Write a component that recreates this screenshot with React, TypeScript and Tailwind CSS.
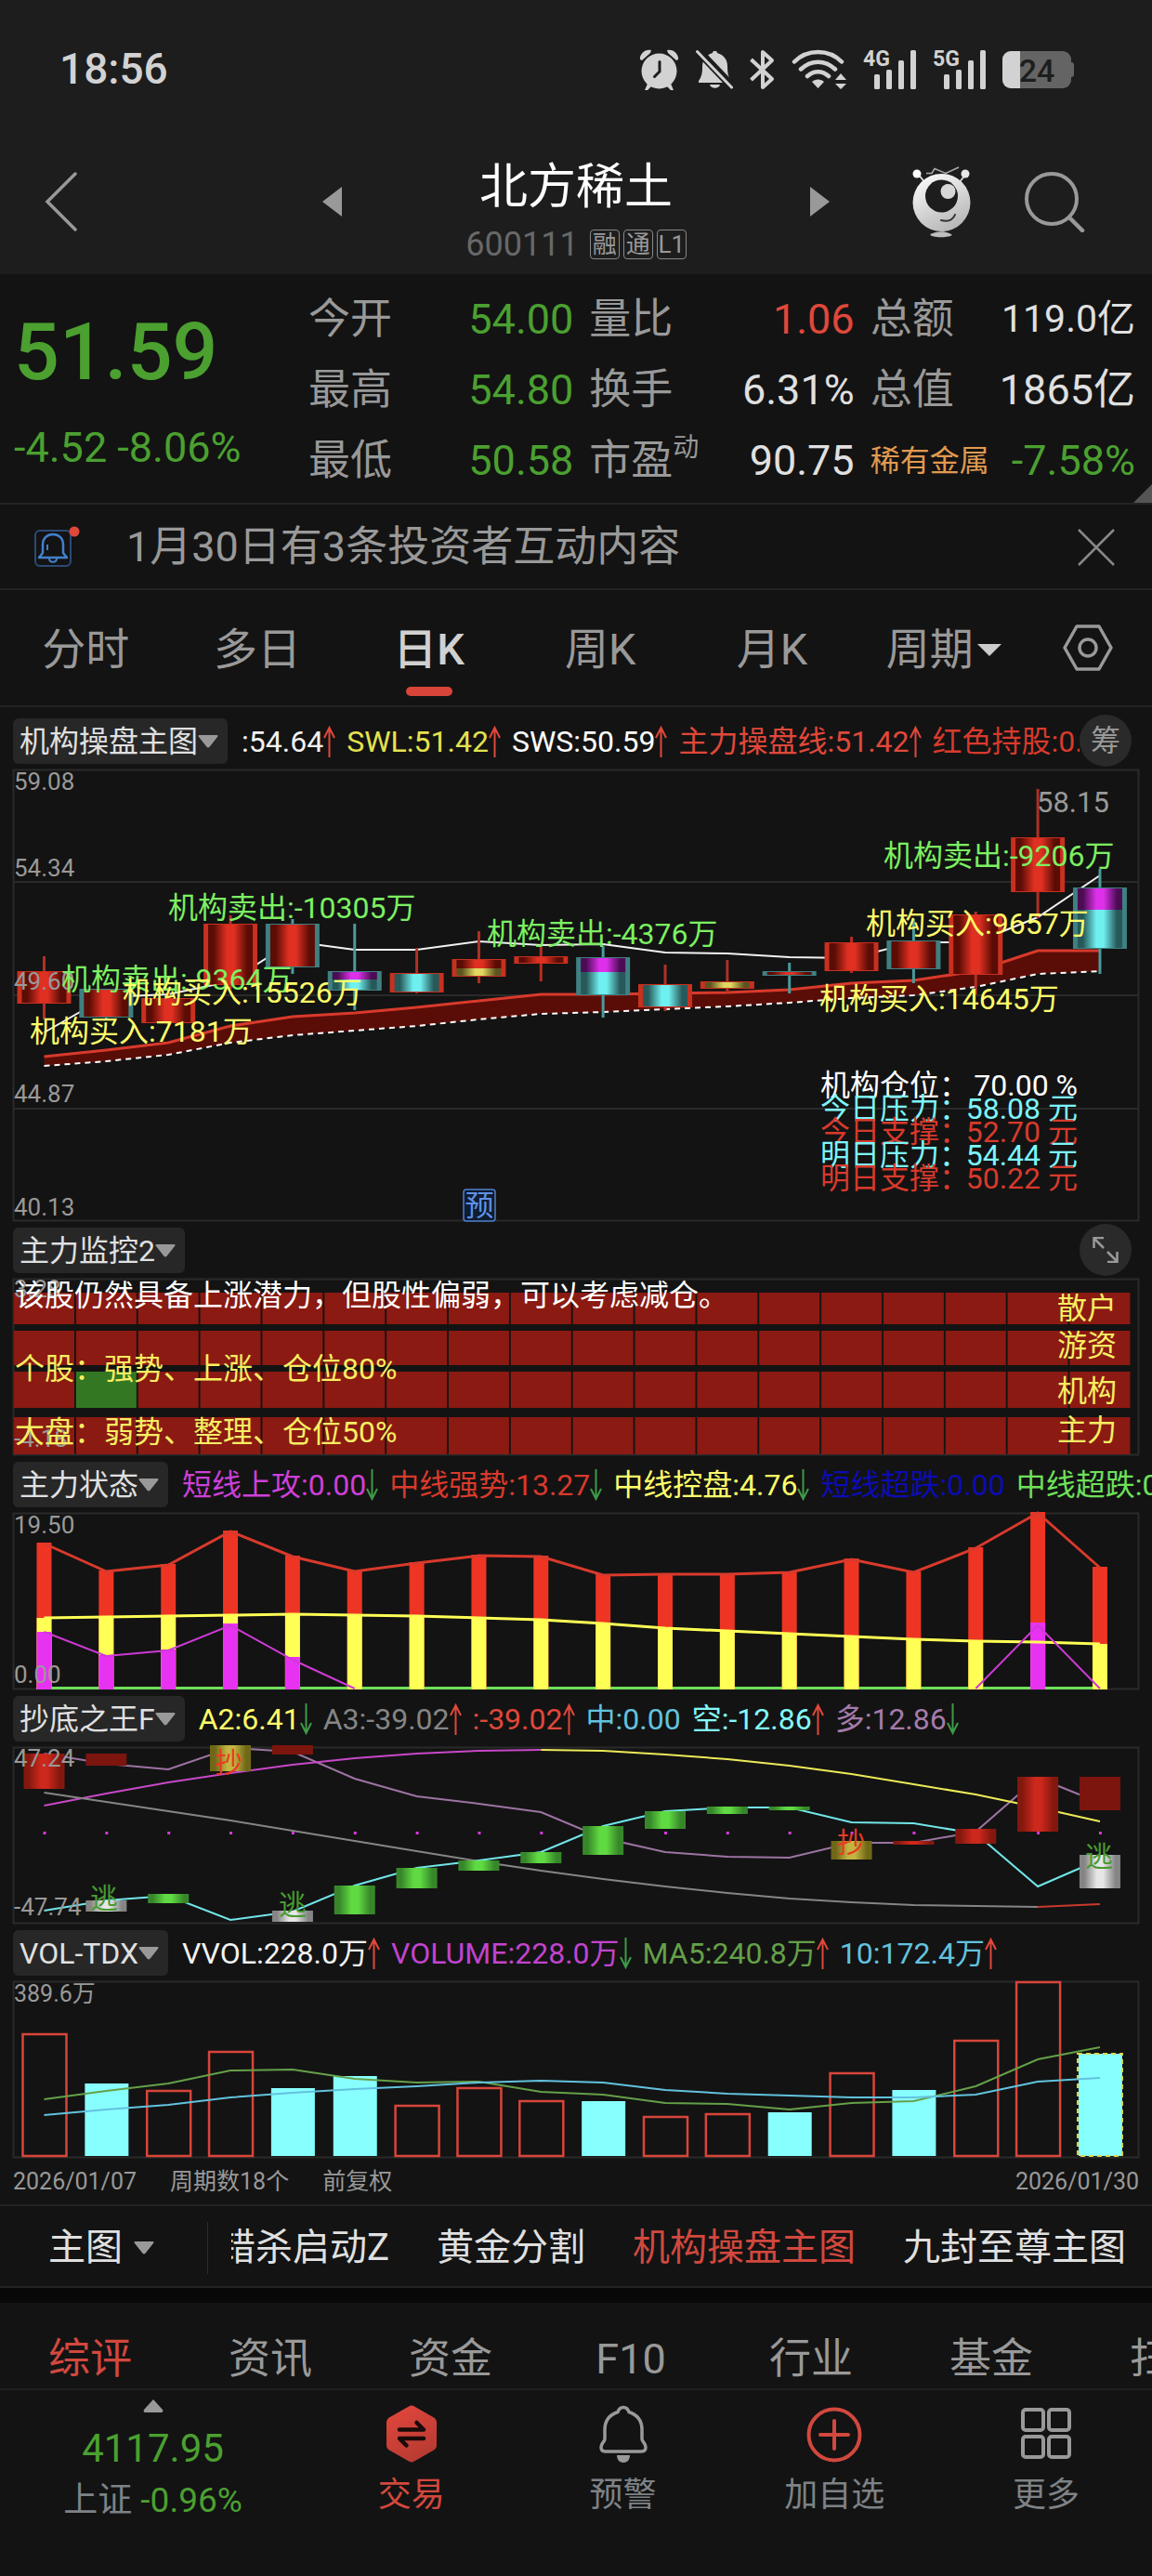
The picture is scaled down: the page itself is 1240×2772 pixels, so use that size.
import { FC, ReactNode, useState } from "react";

const GREEN = "#4ba030";
const RED = "#e0483a";

// bars are evenly spaced over the 1212 wide plot
const STEP = 66.85;
const barX = (i: number) => 33.5 + STEP * i;

const toPoints = (ys: number[], from = 0) =>
  ys.map((y, i) => `${barX(i + from)},${y}`).join(" ");

interface Indicator {
  text: string;
  color: string;
  dir?: "up" | "down";
}

interface Candle {
  high: number;
  top: number;
  bottom: number;
  low: number;
  edge: "red" | "teal";
  fill: "red" | "cyan";
  cap?: { fill: "purple" | "red"; to: number; rest?: "yellow" };
}

const quoteRows = [
  [
    { label: "今开", value: "54.00", color: "text-[#4ba030]" },
    { label: "量比", value: "1.06", color: "text-[#e0483a]" },
    { label: "总额", value: "119.0亿", color: "text-[#e0e0e0]", small: true },
  ],
  [
    { label: "最高", value: "54.80", color: "text-[#4ba030]" },
    { label: "换手", value: "6.31%", color: "text-[#e0e0e0]" },
    { label: "总值", value: "1865亿", color: "text-[#e0e0e0]" },
  ],
  [
    { label: "最低", value: "50.58", color: "text-[#4ba030]" },
    { label: "市盈", sup: "动", value: "90.75", color: "text-[#e0e0e0]" },
    { label: "稀有金属", tag: true, value: "-7.58%", color: "text-[#4ba030]" },
  ],
];

const candles: Candle[] = [
  { high: 201, top: 217, bottom: 252, low: 269, edge: "red", fill: "red" },
  { high: 236, top: 236, bottom: 267, low: 270, edge: "teal", fill: "red" },
  { high: 236, top: 246, bottom: 273, low: 275, edge: "red", fill: "red" },
  { high: 157, top: 166, bottom: 232, low: 236, edge: "red", fill: "red" },
  { high: 161, top: 166, bottom: 213, low: 220, edge: "teal", fill: "red" },
  { high: 166, top: 217, bottom: 238, low: 259, edge: "teal", fill: "cyan", cap: { fill: "purple", to: 226 } },
  { high: 192, top: 219, bottom: 240, low: 241, edge: "red", fill: "cyan" },
  { high: 174, top: 204, bottom: 223, low: 230, edge: "red", fill: "red", cap: { fill: "red", to: 214, rest: "yellow" } },
  { high: 190, top: 201, bottom: 209, low: 228, edge: "red", fill: "red" },
  { high: 190, top: 202, bottom: 243, low: 267, edge: "teal", fill: "cyan", cap: { fill: "purple", to: 218 } },
  { high: 210, top: 231, bottom: 256, low: 260, edge: "red", fill: "cyan" },
  { high: 205, top: 228, bottom: 236, low: 240, edge: "red", fill: "red", cap: { fill: "red", to: 229, rest: "yellow" } },
  { high: 208, top: 217, bottom: 222, low: 241, edge: "teal", fill: "red" },
  { high: 180, top: 186, bottom: 217, low: 219, edge: "red", fill: "red" },
  { high: 161, top: 184, bottom: 215, low: 230, edge: "teal", fill: "red" },
  { high: 153, top: 156, bottom: 221, low: 242, edge: "red", fill: "red" },
  { high: 21, top: 73, bottom: 132, low: 160, edge: "red", fill: "red" },
  { high: 107, top: 127, bottom: 193, low: 220, edge: "teal", fill: "cyan", cap: { fill: "purple", to: 151 } },
];

const upperLine = [283, 245, 242, 228, 185, 194, 194, 185, 189, 188, 197, 198, 202, 203, 186, 186, 159, 114];
const bandTop = [309, 302, 294, 276, 266, 262, 256, 249, 242, 242, 241, 240, 237, 230, 227, 217, 195, 195];
const bandBottom = [319, 314, 307, 294, 286, 281, 276, 269, 263, 261, 258, 255, 251, 246, 243, 234, 220, 217];

const chartNotes = [
  { x: 52, y: 237, text: "机构卖出:-9364万", color: "#7cf062" },
  { x: 118, y: 251, text: "机构买入:15526万", color: "#ffff6a" },
  { x: 18, y: 293, text: "机构买入:7181万", color: "#ffff6a" },
  { x: 167, y: 160, text: "机构卖出:-10305万", color: "#7cf062" },
  { x: 510, y: 188, text: "机构卖出:-4376万", color: "#7cf062" },
  { x: 937, y: 104, text: "机构卖出:-9206万", color: "#7cf062" },
  { x: 918, y: 177, text: "机构买入:9657万", color: "#ffff6a" },
  { x: 868, y: 258, text: "机构买入:14645万", color: "#ffff6a" },
];

const levels = [
  { label: "机构仓位：", value: "70.00 %", color: "#ffffff" },
  { label: "今日压力：", value: "58.08 元", color: "#7cf5fb" },
  { label: "今日支撑：", value: "52.70 元", color: "#d83a2c" },
  { label: "明日压力：", value: "54.44 元", color: "#7cf5fb" },
  { label: "明日支撑：", value: "50.22 元", color: "#d83a2c" },
];

const statusRed = [32, 62, 55, 19, 46, 62, 53, 45, 46, 66, 65, 65, 63, 49, 63, 37, -1, 58];
const statusYellow = [113, 112, 111, 110, 109, 110, 111, 113, 115, 119, 124, 127, 130, 133, 136, 138, 139, 141];
const statusPurple: Record<number, number> = { 0: 128, 1: 153, 2: 147, 3: 119, 4: 155, 16: 118 };

const volumes = [
  { y: 57, up: true }, { y: 110 }, { y: 118, up: true }, { y: 76, up: true }, { y: 115 }, { y: 102 },
  { y: 134, up: true }, { y: 115, up: true }, { y: 129, up: true }, { y: 129 }, { y: 146, up: true },
  { y: 143, up: true }, { y: 141 }, { y: 99, up: true }, { y: 117 }, { y: 64, up: true }, { y: 1, up: true }, { y: 78 },
];
const ma5 = [127, 118, 110, 96, 95, 105, 109, 108, 119, 122, 131, 132, 138, 131, 129, 113, 84, 71];
const ma10 = [144, 138, 133, 125, 120, 116, 113, 109, 107, 109, 117, 121, 123, 125, 125, 122, 108, 104];

const Caret: FC = () => (
  <svg className="h-[14px] w-[22px] shrink-0" viewBox="0 0 22 14" aria-hidden="true">
    <path d="M1.500 0h19c1 0 1.300 1 .7 1.700L12.500 12.800c-.8 1-2.200 1-3 0L.8 1.700C.2 1 .5 0 1.500 0z" fill="#999" />
  </svg>
);

const DirArrow: FC<{ dir: "up" | "down" }> = ({ dir }) => (
  <svg className="h-[34px] w-[13px] shrink-0" viewBox="0 0 13 34" fill="none" aria-hidden="true">
    {dir === "up" ? (
      <path d="M6.500 34V3M1 13L6.500 2L12 13" stroke="#e0483a" strokeWidth="2" />
    ) : (
      <path d="M6.500 0V31M1 21L6.500 32L12 21" stroke="#3f9a48" strokeWidth="2" />
    )}
  </svg>
);

const IndicatorBar: FC<{ name: string; items?: Indicator[]; action?: ReactNode }> = ({
  name,
  items = [],
  action,
}) => (
  <div className="flex h-[62px] items-center pl-[14px]">
    <button
      type="button"
      aria-haspopup="menu"
      className="mr-[15px] flex h-[49px] shrink-0 items-center rounded-md bg-[#272727] pt-0.5 pr-[10px] pl-[7px] text-[32px] text-[#e0e0e0]"
    >
      {name}
      <Caret />
    </button>
    <div className="flex min-w-0 flex-1 items-center gap-3 overflow-hidden pt-0.5 text-[32px] whitespace-nowrap">
      {items.map((it) => (
        <span key={it.text} className="flex shrink-0 items-center" style={{ color: it.color }}>
          {it.text}
          {it.dir && <DirArrow dir={it.dir} />}
        </span>
      ))}
    </div>
    {action}
  </div>
);

const Frame: FC<{ height: number }> = ({ height }) => (
  <rect x="0.500" y="0.500" width="1211" height={height - 1} fill="none" stroke="#2a2a2a" strokeWidth="2" />
);

const Gradient: FC<{ id: string; edge: string; mid: string }> = ({ id, edge, mid }) => (
  <linearGradient id={id}>
    <stop offset="0" stopColor={edge} />
    <stop offset="0.120" stopColor={edge} />
    <stop offset="0.420" stopColor={mid} />
    <stop offset="0.580" stopColor={mid} />
    <stop offset="0.880" stopColor={edge} />
    <stop offset="1" stopColor={edge} />
  </linearGradient>
);

const StatusIcons: FC = () => (
  <div className="flex items-center gap-[18px]">
    <svg className="h-11 w-[43px]" viewBox="0 0 43 44" fill="#d2d2d2" aria-label="闹钟">
      <path d="M1 11C0 6 6-1 13 1L12 4L3 12zM42 11c1-5-5-12-12-10l1 3 9 8z" />
      <path d="M9 37l-3 7h3l5-5zM34 37l3 7h-3l-5-5z" />
      <circle cx="21.500" cy="23.500" r="19" />
      <path d="M22 13.500V24L16.500 29.500" fill="none" stroke="#1d1d1d" strokeWidth="3" strokeLinecap="round" />
    </svg>
    <svg className="h-11 w-10" viewBox="0 0 40 44" fill="#d2d2d2" aria-label="静音">
      <path d="M18 4c0-3 5-3 5 0 7 2 11 7 11 14 0 8 1 12 4 16v2H3v-2c3-4 4-8 4-15 0-8 4-13 11-15z" />
      <path d="M15 38h11c-1 5-10 5-11 0z" />
      <path d="M-1-2L41 42" stroke="#1d1d1d" strokeWidth="9" />
      <path d="M1.500 2.500L38.500 41" stroke="#d2d2d2" strokeWidth="3" strokeLinecap="round" />
    </svg>
    <svg className="h-11 w-[27px]" viewBox="0 0 27 44" fill="none" stroke="#d2d2d2" strokeWidth="4" aria-label="蓝牙">
      <path d="M1.500 11L24 32L14 41V3l10 9L1.500 33" strokeLinejoin="round" />
    </svg>
    <svg className="h-11 w-[59px]" viewBox="0 0 59 44" fill="none" stroke="#d2d2d2" strokeWidth="4.500" strokeLinecap="round" aria-label="无线网络">
      <path d="M3 13.500C17-.5 40-.5 54 13.500M10 21.500c11-10.500 26-10.500 37 0M17 29c7-6.500 16-6.500 23 0" />
      <path d="M28.500 42l-6.500-7c3-3.500 10-3.500 13 0zM53 26l6 7H47zM53 43l-6-6h12z" fill="#d2d2d2" stroke="none" />
    </svg>
    {["4G", "5G"].map((net) => (
      <svg key={net} className="h-11 w-[57px] overflow-visible" viewBox="0 0 57 44" fill="#d2d2d2" aria-label={net}>
        <text x="0" y="18" fontSize="23" fontWeight="700">{net}</text>
        <rect x="12" y="27" width="6" height="16" rx="1.500" />
        <rect x="25" y="22" width="6" height="21" rx="1.500" />
        <rect x="38" y="12" width="6" height="31" rx="1.500" />
        <rect x="51" y="1" width="6" height="42" rx="1.500" />
      </svg>
    ))}
    <svg className="h-10 w-[77px]" viewBox="0 0 77 40" aria-label="电量 24">
      <rect width="74" height="40" rx="9" fill="#646464" />
      <rect x="70" y="12" width="7" height="16" rx="3" fill="#646464" />
      <path d="M9 0h10v40H9a9 9 0 0 1-9-9V9a9 9 0 0 1 9-9z" fill="#d2d2d2" />
      <text x="37" y="33" fontSize="34" fontWeight="500" textAnchor="middle" fill="#1d1d1d">24</text>
    </svg>
  </div>
);

const Mascot: FC = () => (
  <svg className="h-[78px] w-16" viewBox="0 0 64 78" aria-hidden="true">
    <defs>
      <linearGradient id="mascot" x1="0.200" y1="0" x2="0.700" y2="1">
        <stop offset="0" stopColor="#fafafa" />
        <stop offset="1" stopColor="#b4b4b4" />
      </linearGradient>
    </defs>
    <path d="M15 8.500h6l3-5 12 5L50 2" fill="none" stroke="#aaa" strokeWidth="1.500" />
    <path d="M6 9l8 10M58 9l-8 10" stroke="#d8d8d8" strokeWidth="2" />
    <circle cx="5" cy="9" r="4.500" fill="#fff" />
    <circle cx="57" cy="9" r="4.500" fill="#e8e8e8" />
    <circle cx="31.500" cy="40" r="31" fill="url(#mascot)" />
    <circle cx="31.500" cy="33" r="17.500" fill="#1d1d1d" />
    <circle cx="38.500" cy="28" r="8" fill="#d6d6d6" />
    <path d="M31 59c8 2 13-1 15-6" fill="none" stroke="#333" strokeWidth="2" strokeLinecap="round" />
    <path d="M19 75c5-5 19-5 24 0-5 3-19 3-24 0z" fill="#bdbdbd" />
  </svg>
);

const MainChart: FC = () => {
  const edges = { red: "#c8301f", teal: "#3f8082" };
  const wicks = { red: "#b03024", teal: "#4a9a9c" };
  return (
    <svg className="block h-auto w-full overflow-visible" viewBox="0 0 1212 486" role="img" aria-label="日K线">
      <defs>
        <Gradient id="k-red" edge="#5a0c05" mid="#e03022" />
        <Gradient id="k-cyan" edge="#27595a" mid="#6ff0f0" />
        <Gradient id="k-purple" edge="#4c0c54" mid="#de30ea" />
        <Gradient id="k-yellow" edge="#5c5420" mid="#e0d860" />
      </defs>
      <Frame height={486} />
      {[121, 243, 365].map((y) => (
        <path key={y} d={`M0 ${y}H1212`} stroke="#2a2a2a" strokeWidth="2" />
      ))}
      <polygon
        points={`${toPoints(bandTop)} ${bandBottom.map((y, i) => `${barX(i)},${y}`).reverse().join(" ")}`}
        fill="#5a0d07"
      />
      <polyline points={toPoints(bandTop)} fill="none" stroke="#d83a2c" strokeWidth="3" />
      <polyline points={toPoints(bandBottom)} fill="none" stroke="#fff" strokeWidth="2" strokeDasharray="6 5" />
      <polyline points={toPoints(upperLine)} fill="none" stroke="#f2f2f2" strokeWidth="2" />
      {candles.map((c, i) => {
        const x = barX(i);
        const h = c.bottom - c.top;
        return (
          <g key={i}>
            <path d={`M${x} ${c.high}V${c.low}`} stroke={wicks[c.edge]} strokeWidth="3" />
            <rect x={x - 29} y={c.top} width="58" height={h} fill={edges[c.edge]} />
            <rect x={x - 24} y={c.top + 1} width="48" height={h - 2} fill={c.cap?.rest ? "url(#k-yellow)" : `url(#k-${c.fill})`} />
            {c.cap && <rect x={x - 24} y={c.top + 1} width="48" height={c.cap.to - c.top - 1} fill={`url(#k-${c.cap.fill})`} />}
          </g>
        );
      })}
      <g fontSize="26" fill="#999">
        {["59.08", "54.34", "49.60", "44.87", "40.13"].map((t, i) => (
          <text key={t} x="1" y={[22, 115, 237, 358, 480][i]}>{t}</text>
        ))}
      </g>
      <text x="1102" y="46" fontSize="31" fill="#999">58.15</text>
      <g fontSize="32">
        {chartNotes.map((n) => (
          <text key={n.text} x={n.x} y={n.y} fill={n.color}>{n.text}</text>
        ))}
        {levels.map((l, i) => (
          <g key={l.label} fill={l.color}>
            <text x="869" y={351 + i * 25}>{l.label}</text>
            <text x="1146" y={351 + i * 25} textAnchor="end">{l.value}</text>
          </g>
        ))}
      </g>
      <rect x="485" y="452" width="34" height="34" rx="3" fill="#101c30" stroke="#4f80cc" strokeWidth="1.500" />
      <text x="502" y="480" fontSize="31" textAnchor="middle" fill="#5f92e6">预</text>
    </svg>
  );
};

const MonitorChart: FC = () => {
  const rows = [
    { y: 15, h: 34, label: "散户", base: 43 },
    { y: 56, h: 37, label: "游资", base: 83 },
    { y: 100, h: 39, label: "机构", base: 132 },
    { y: 149, h: 40, label: "主力", base: 174 },
  ];
  return (
    <svg className="block h-auto w-full overflow-visible" viewBox="0 0 1212 190" role="img" aria-label="主力监控">
      <Frame height={190} />
      {rows.map((r, ri) =>
        candles.map((_, i) => (
          <rect
            key={`${ri}-${i}`}
            x={1 + i * STEP}
            y={r.y}
            width="65"
            height={r.h}
            fill={ri === 2 && i === 1 ? "#337722" : "#8b1a12"}
          />
        ))
      )}
      <g fontSize="26" fill="#999">
        <text x="1" y="20">3.28</text>
        <text x="1" y="181">-4.18</text>
      </g>
      <g fontSize="32" fill="#f7ee62">
        <text x="2" y="29" fill="#fff">该股仍然具备上涨潜力，但股性偏弱，可以考虑减仓。</text>
        <text x="2" y="108">个股：强势、上涨、仓位80%</text>
        <text x="2" y="176">大盘：弱势、整理、仓位50%</text>
        {rows.map((r) => (
          <text key={r.label} x="1124" y={r.base}>{r.label}</text>
        ))}
      </g>
    </svg>
  );
};

const StatusChart: FC = () => (
  <svg className="block h-auto w-full overflow-visible" viewBox="0 0 1212 190" role="img" aria-label="主力状态">
    <Frame height={190} />
    <path d={`M${barX(0)} 188.500H${barX(17)}`} stroke="#6ee05a" strokeWidth="3" />
    {statusRed.map((y, i) => (
      <g key={i}>
        <rect x={barX(i) - 8} y={y} width="16" height={190 - y} fill="#ee3524" />
        <rect x={barX(i) - 8} y={statusYellow[i]} width="16" height={190 - statusYellow[i]} fill="#ffff55" />
        {statusPurple[i] && (
          <rect x={barX(i) - 8} y={statusPurple[i]} width="16" height={190 - statusPurple[i]} fill="#e832f2" />
        )}
      </g>
    ))}
    <g fill="none" strokeWidth="2">
      <polyline points={toPoints(statusRed.map((y) => y + 1))} stroke="#d83a2c" strokeWidth="3" />
      <polyline points={toPoints(statusYellow)} stroke="#ffff55" strokeWidth="3" />
      <polyline points={toPoints([128, 154, 148, 121, 158, 189])} stroke="#cc3ad4" />
      <polyline points={toPoints([189, 121, 189], 15)} stroke="#cc3ad4" />
    </g>
    <g fontSize="26" fill="#999">
      <text x="1" y="22">19.50</text>
      <text x="1" y="183">0.00</text>
    </g>
  </svg>
);

const bottomBars = [
  { i: 0, y: 7, h: 38, fill: "red" }, { i: 1, y: 7, h: 13, fill: "dark" }, { i: 1, y: 165, h: 12, fill: "gray" },
  { i: 2, y: 158, h: 10, fill: "green" }, { i: 3, y: -2, h: 28, fill: "gold" }, { i: 4, y: -2, h: 10, fill: "dark" },
  { i: 4, y: 176, h: 12, fill: "gray" }, { i: 5, y: 149, h: 31, fill: "green" }, { i: 6, y: 130, h: 22, fill: "green" },
  { i: 7, y: 122, h: 11, fill: "green" }, { i: 8, y: 113, h: 12, fill: "green" }, { i: 9, y: 85, h: 31, fill: "green" },
  { i: 10, y: 69, h: 19, fill: "green" }, { i: 11, y: 64, h: 8, fill: "green" }, { i: 12, y: 64, h: 4, fill: "green" },
  { i: 13, y: 101, h: 20, fill: "gold" }, { i: 14, y: 101, h: 4, fill: "red" }, { i: 15, y: 88, h: 16, fill: "red" },
  { i: 16, y: 32, h: 59, fill: "red" }, { i: 17, y: 32, h: 36, fill: "dark" }, { i: 17, y: 116, h: 36, fill: "gray" },
];

const BottomChart: FC = () => (
  <svg className="block h-auto w-full overflow-visible" viewBox="0 0 1212 190" role="img" aria-label="抄底之王">
    <defs>
      <Gradient id="b-red" edge="#84180e" mid="#cc281b" />
      <Gradient id="b-green" edge="#37872a" mid="#60da42" />
      <Gradient id="b-gold" edge="#706818" mid="#c2b640" />
      <Gradient id="b-gray" edge="#858585" mid="#e6e6e6" />
      <linearGradient id="b-dark"><stop stopColor="#7c150d" /></linearGradient>
    </defs>
    <Frame height={190} />
    {candles.map((_, i) => (
      <rect key={i} x={barX(i) - 1} y="91" width="3" height="3" fill="#d838e0" />
    ))}
    <g fill="none" strokeWidth="2">
      <polyline points={toPoints([7, 18, 24, 1, 5, 34, 53, 61, 70, 98, 113, 118, 119, 103, 103, 91, 33, 60])} stroke="#9c74a2" />
      <polyline points={toPoints([63, 50, 38, 28, 19, 12, 7, 4, 3])} stroke="#c848c8" />
      <polyline points={toPoints([3, 4, 8, 13, 20, 29, 40, 51, 65, 80], 8)} stroke="#ecea58" />
      <polyline points={toPoints([49, 59, 69, 79, 90, 101, 112, 123, 133, 142, 150, 157, 163, 167, 170, 171, 172])} stroke="#858585" />
      <polyline points={toPoints([172, 169], 16)} stroke="#c83a2c" />
      <polyline points={toPoints([176, 165, 160, 186, 177, 149, 130, 122, 113, 85, 69, 65, 65, 81, 82, 93, 150, 121])} stroke="#72e6ea" />
    </g>
    {bottomBars.map((b) => (
      <rect key={`${b.i}-${b.y}`} x={barX(b.i) - 22} y={b.y} width="44" height={b.h} fill={`url(#b-${b.fill})`} />
    ))}
    <g fontSize="30" textAnchor="middle" fill="#ea3a24">
      <text x="232" y="27">抄</text>
      <text x="902" y="113">抄</text>
    </g>
    <g fontSize="30" textAnchor="middle" fill="#489a30">
      <text x="98" y="173">逃</text>
      <text x="301" y="180">逃</text>
      <text x="1169" y="128">逃</text>
    </g>
    <g fontSize="26" fill="#999">
      <text x="1" y="21">47.24</text>
      <text x="1" y="181">-47.74</text>
    </g>
  </svg>
);

const VolumeChart: FC = () => (
  <svg className="block h-auto w-full overflow-visible" viewBox="0 0 1212 190" role="img" aria-label="成交量">
    <Frame height={190} />
    {volumes.map((v, i) =>
      v.up ? (
        <rect key={i} x={barX(i) - 23} y={v.y} width="47" height={188 - v.y} fill="#131313" stroke="#d8453a" strokeWidth="2.500" />
      ) : (
        <rect key={i} x={barX(i) - 23} y={v.y} width="47" height={188 - v.y} fill="#88ffff" />
      )
    )}
    <rect x={barX(17) - 24} y="78" width="48" height="110" fill="none" stroke="#dcd84e" strokeWidth="2" strokeDasharray="5 4" />
    <polyline points={toPoints(ma5)} fill="none" stroke="#65a048" strokeWidth="2" />
    <polyline points={toPoints(ma10)} fill="none" stroke="#62c2de" strokeWidth="2" />
    <text x="1" y="22" fontSize="25" fill="#999">389.6万</text>
  </svg>
);

const navItems = [
  {
    label: "交易",
    active: true,
    icon: (
      <svg className="h-[62px] w-[56px]" viewBox="0 0 56 62" aria-hidden="true">
        <defs>
          <linearGradient id="trade" x1="0.200" y1="0" x2="0.700" y2="1">
            <stop offset="0" stopColor="#e2463c" />
            <stop offset="1" stopColor="#b53a32" />
          </linearGradient>
        </defs>
        <path d="M25 1.500q3-2 6 0L52 13.500q3 2 3 5.500v24q0 3.500-3 5.500L31 60.500q-3 2-6 0L4 48.500Q1 46.500 1 43V19q0-3.500 3-5.500z" fill="url(#trade)" />
        <path d="M15 26.500H41L33.500 19M41 36H15l7.500 7.500" fill="none" stroke="#1a0b0a" strokeWidth="4.500" strokeLinecap="round" strokeLinejoin="round" />
      </svg>
    ),
  },
  {
    label: "预警",
    icon: (
      <svg className="h-[62px] w-[52px]" viewBox="0 0 52 62" aria-hidden="true">
        <path
          d="M26 2.500c3 0 5 2 6 5 9 3 14 10 14 19v10c0 3 4 4 4 9 0 3-1.500 4.500-4.500 4.500h-39C3.500 50 2 48.500 2 45.500c0-5 4-6 4-9v-10c0-9 5-16 14-19 1-3 3-5 6-5z"
          fill="none"
          stroke="#999"
          strokeWidth="3.500"
        />
        <path d="M19 54h14c0 5-3 8-7 8s-7-3-7-8z" fill="#999" />
      </svg>
    ),
  },
  {
    label: "加自选",
    icon: (
      <svg className="h-[62px] w-[60px]" viewBox="0 0 60 62" fill="none" stroke="#d2483e" strokeWidth="4" aria-hidden="true">
        <circle cx="30" cy="32" r="27.500" />
        <path d="M30 17v30M15 32h30" strokeLinecap="round" />
      </svg>
    ),
  },
  {
    label: "更多",
    icon: (
      <svg className="h-[62px] w-[56px]" viewBox="0 0 56 62" fill="none" stroke="#999" strokeWidth="4" aria-hidden="true">
        <rect x="3" y="5" width="22" height="22" rx="3" />
        <rect x="31" y="5" width="22" height="22" rx="3" />
        <rect x="3" y="34" width="22" height="22" rx="3" />
        <rect x="31" y="34" width="22" height="22" rx="3" />
      </svg>
    ),
  },
];

const App: FC = () => {
  const [period, setPeriod] = useState("日K");
  const [section, setSection] = useState("综评");

  return (
    <div className="min-h-screen overflow-x-hidden bg-[#131313] font-['Roboto','Noto_Sans_CJK_SC',sans-serif] leading-tight text-[#999]">
      <header className="bg-[#1d1d1d]">
        <div className="flex h-[150px] items-center justify-between pr-[84px] pl-16">
          <span className="text-[46px] font-medium text-[#d2d2d2]">18:56</span>
          <StatusIcons />
        </div>
        <div className="grid h-[145px] grid-cols-[1fr_546px_1fr] items-center pb-3">
          <button type="button" aria-label="返回" className="ml-12 w-9">
            <svg viewBox="0 0 36 64" className="h-16 w-9" fill="none" stroke="#999" strokeWidth="3.500" strokeLinecap="round">
              <path d="M33 2L3 32l30 30" />
            </svg>
          </button>
          <div className="flex items-center justify-between">
            <button type="button" aria-label="上一只">
              <svg viewBox="0 0 21 32" className="h-8 w-[21px]" fill="#999"><path d="M21 0v32L0 16z" /></svg>
            </button>
            <div className="flex flex-col items-center gap-[11px] pt-[22px]">
              <h1 className="text-[52px] leading-[60px] text-white">北方稀土</h1>
              <div className="flex h-10 items-center gap-1 text-[36px] text-[#686868]">
                <span className="mr-2">600111</span>
                {["融", "通", "L1"].map((t) => (
                  <span
                    key={t}
                    className="flex size-8 items-center justify-center rounded-sm border border-[#888] text-[26px] text-[#999]"
                  >
                    {t}
                  </span>
                ))}
              </div>
            </div>
            <button type="button" aria-label="下一只">
              <svg viewBox="0 0 21 32" className="h-8 w-[21px]" fill="#999"><path d="M0 0v32l21-16z" /></svg>
            </button>
          </div>
          <div className="flex items-center justify-end gap-[56px] pr-[72px]">
            <button type="button" aria-label="助手"><Mascot /></button>
            <button type="button" aria-label="搜索">
              <svg viewBox="0 0 66 66" className="size-[66px]" fill="none" stroke="#999" strokeWidth="4" strokeLinecap="round">
                <circle cx="30" cy="30" r="27" />
                <path d="M49 50l14 14" strokeWidth="4.500" />
              </svg>
            </button>
          </div>
        </div>
      </header>

      <section className="relative flex border-b-2 border-[#232323] pt-[11px] pb-[7px]">
        <div className="w-[332px] shrink-0 pl-[15px] text-[#4ba030]">
          <div className="pt-[18px] text-[86px] leading-[110px] font-medium">51.59</div>
          <div className="pt-5 text-[45px] leading-[56px] whitespace-nowrap">-4.52 -8.06%</div>
        </div>
        <div className="flex-1 pr-[18px]">
          {quoteRows.map((row, ri) => (
            <dl key={ri} className="grid h-[76px] grid-cols-3 items-center gap-[17px]">
              {row.map((q) => (
                <div key={q.label} className="flex items-center justify-between whitespace-nowrap">
                  {q.tag ? (
                    <dt className="text-[32px] text-[#e09a50]">{q.label}</dt>
                  ) : (
                    <dt className="flex text-[45px]">
                      {q.label}
                      {q.sup && <span className="text-[28px] leading-none">{q.sup}</span>}
                    </dt>
                  )}
                  <dd className={q.color + (q.small ? " text-[41px]" : " text-[45px]")}>{q.value}</dd>
                </div>
              ))}
            </dl>
          ))}
        </div>
        <svg className="absolute right-0 bottom-0 size-5" viewBox="0 0 20 20" aria-hidden="true">
          <path d="M20 0v20H0z" fill="#555" />
        </svg>
      </section>

      <section className="flex h-[92px] items-center border-b-2 border-[#232323] pt-0.5 pr-10 pl-9">
        <svg viewBox="0 0 52 48" className="h-12 w-[52px]" fill="none" aria-hidden="true">
          <rect x="2" y="6" width="38" height="38" rx="5" stroke="#2c4a75" strokeWidth="2" />
          <path d="M21 10c6 0 11 4 11 11v9l4 5H6l4-5v-9c0-7 5-11 11-11z" stroke="#4380cc" strokeWidth="2.500" strokeLinejoin="round" />
          <path d="M17 36c0 5 8 5 8 0M15 21v6" stroke="#4380cc" strokeWidth="2" />
          <circle cx="44" cy="7" r="5.500" fill="#e0483a" />
        </svg>
        <p className="ml-[48px] flex-1 text-[45px]">1月30日有3条投资者互动内容</p>
        <button type="button" aria-label="关闭">
          <svg viewBox="0 0 40 40" className="size-10" fill="none" stroke="#888" strokeWidth="2.500">
            <path d="M1 1l38 38M39 1L1 39" />
          </svg>
        </button>
      </section>

      <nav className="flex h-[126px] border-b-2 border-[#232323] text-[47px]">
        {["分时", "多日", "日K", "周K", "月K", "周期"].map((t) => (
          <button
            key={t}
            type="button"
            onClick={() => setPeriod(t)}
            className="relative flex flex-1 items-center justify-center pt-1"
          >
            <span className={t === period ? "font-medium text-[#d0d0d0]" : ""}>{t}</span>
            {t === "周期" && (
              <svg viewBox="0 0 26 13" className="ml-1 h-[13px] w-[26px]"><path d="M0 0h26L13 13z" fill="#ccc" /></svg>
            )}
            {t === period && (
              <span className="absolute bottom-[10px] h-[10px] w-[50px] rounded-full bg-[#d6443a]" />
            )}
          </button>
        ))}
        <button type="button" aria-label="设置" className="w-[132px] pl-9">
          <svg viewBox="0 0 54 50" className="h-[50px] w-[54px]" fill="none" stroke="#999" strokeWidth="3.500">
            <path d="M15 2h24l13 23-13 23H15L2 25z" strokeLinejoin="round" />
            <circle cx="27" cy="25" r="9" />
          </svg>
        </button>
      </nav>

      <main>
        <div className="pt-[5px]">
          <IndicatorBar
            name="机构操盘主图"
            items={[
              { text: ":54.64", color: "#f2f2f2", dir: "up" },
              { text: "SWL:51.42", color: "#e4e24e", dir: "up" },
              { text: "SWS:50.59", color: "#ffffff", dir: "up" },
              { text: "主力操盘线:51.42", color: "#e0483a", dir: "up" },
              { text: "红色持股:0.00", color: "#d83a2c" },
            ]}
            action={
              <button type="button" className="mr-[22px] flex size-14 items-center justify-center rounded-full bg-[#2a2a2a] text-[32px]">
                筹
              </button>
            }
          />
        </div>
        <div className="px-[14px]"><MainChart /></div>

        <IndicatorBar
          name="主力监控2"
          action={
            <button type="button" aria-label="展开" className="mr-[22px] flex size-14 items-center justify-center rounded-full bg-[#2a2a2a]">
              <svg viewBox="0 0 28 28" className="size-7" fill="none" stroke="#999" strokeWidth="2.500">
                <path d="M12 1H1.500v11M1.500 1.500L12 12M16 27h10.500V16M26.500 26.500L16 16" />
              </svg>
            </button>
          }
        />
        <div className="px-[14px]"><MonitorChart /></div>

        <IndicatorBar
          name="主力状态"
          items={[
            { text: "短线上攻:0.00", color: "#cc40d8", dir: "down" },
            { text: "中线强势:13.27", color: "#d83a2c", dir: "down" },
            { text: "中线控盘:4.76", color: "#ffff6a", dir: "down" },
            { text: "短线超跌:0.00", color: "#0c0cb4" },
            { text: "中线超跌:0.00", color: "#6ee05a" },
          ]}
        />
        <div className="px-[14px]"><StatusChart /></div>

        <IndicatorBar
          name="抄底之王F"
          items={[
            { text: "A2:6.41", color: "#ffff6a", dir: "down" },
            { text: "A3:-39.02", color: "#858585", dir: "up" },
            { text: ":-39.02", color: RED, dir: "up" },
            { text: "中:0.00", color: "#62c2de" },
            { text: "空:-12.86", color: "#84fafa", dir: "up" },
            { text: "多:12.86", color: "#a57bab", dir: "down" },
          ]}
        />
        <div className="px-[14px]"><BottomChart /></div>

        <IndicatorBar
          name="VOL-TDX"
          items={[
            { text: "VVOL:228.0万", color: "#f2f2f2", dir: "up" },
            { text: "VOLUME:228.0万", color: "#c244cc", dir: "down" },
            { text: "MA5:240.8万", color: "#65a048", dir: "up" },
            { text: "10:172.4万", color: "#62c2de", dir: "up" },
          ]}
        />
        <div className="px-[14px]"><VolumeChart /></div>

        <div className="flex h-[50px] items-center px-[14px] pt-0.5 text-[25px]">
          <span>2026/01/07</span>
          <span className="ml-9">周期数18个</span>
          <span className="ml-9">前复权</span>
          <span className="ml-auto">2026/01/30</span>
        </div>
      </main>

      <div className="flex h-[90px] items-center border-y-2 border-[#232323] pt-1 text-[40px] whitespace-nowrap text-[#e0e0e0]">
        <button type="button" aria-haspopup="menu" className="flex h-14 w-[224px] shrink-0 items-center gap-3 border-r border-[#2c2c2c] pl-[52px]">
          主图
          <Caret />
        </button>
        <div className="ml-[25px] flex min-w-0 flex-1 overflow-hidden">
          <div className="-ml-[14px] flex shrink-0 gap-[51px]">
            <button type="button">错杀启动Z</button>
            <button type="button">黄金分割</button>
            <button type="button" className="text-[#d2483e]">机构操盘主图</button>
            <button type="button">九封至尊主图</button>
          </div>
        </div>
      </div>

      <div className="h-4 bg-[#080808]" />

      <nav className="flex h-[94px] overflow-hidden border-b-2 border-[#1f1f1f] pt-[30px] text-[45px]">
        {["综评", "资讯", "资金", "F10", "行业", "基金", "扫雷"].map((t) => (
          <button
            key={t}
            type="button"
            onClick={() => setSection(t)}
            className={t === section ? "w-[194px] shrink-0 text-[#d2483e]" : "w-[194px] shrink-0"}
          >
            {t}
          </button>
        ))}
      </nav>

      <footer className="grid h-[199px] grid-cols-[329px_repeat(4,1fr)]">
        <button type="button" className="flex flex-col items-center self-start pt-[10px]">
          <svg viewBox="0 0 22 14" className="h-[14px] w-[22px]"><path d="M11 0l10 11c1 1 0 3-1 3H2c-1 0-2-2-1-3z" fill="#999" /></svg>
          <span className="mt-3 text-[42px] leading-[54px]" style={{ color: GREEN }}>4117.95</span>
          <span className="mt-1 text-[37px] leading-[50px] text-[#7d8286]">
            上证 <span style={{ color: GREEN }}>-0.96%</span>
          </span>
        </button>
        {navItems.map((n) => (
          <button key={n.label} type="button" className="flex flex-col items-center gap-2.5 self-start pt-4">
            {n.icon}
            <span className={"text-[36px] leading-[50px] " + (n.active ? "text-[#d2483e]" : "text-[#7d8286]")}>{n.label}</span>
          </button>
        ))}
      </footer>
    </div>
  );
};

export default App;
